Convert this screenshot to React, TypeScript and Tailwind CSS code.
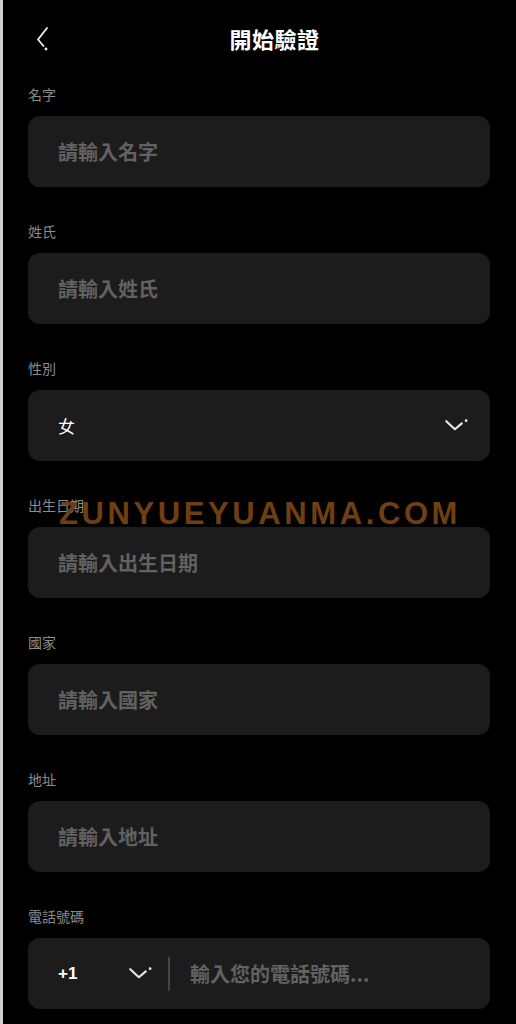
import React from "react";

const fields = [
  { label: "名字", placeholder: "請輸入名字" },
  { label: "姓氏", placeholder: "請輸入姓氏" },
  { label: "性別", value: "女", select: true },
  { label: "出生日期", placeholder: "請輸入出生日期" },
  { label: "國家", placeholder: "請輸入國家" },
  { label: "地址", placeholder: "請輸入地址" },
];

const Chevron = ({ className = "" }: { className?: string }) => (
  <svg viewBox="0 0 24 14" className={className} fill="none">
    <path d="M2 3 L10 10.5 L16.5 5" stroke="#e8e8e8" strokeWidth="2" strokeLinecap="round" strokeLinejoin="round" />
    <circle cx="20.5" cy="2.5" r="1.3" fill="#e8e8e8" />
  </svg>
);

export default function App() {
  return (
    <div
      className="relative min-h-[1024px] w-[516px] bg-black border-l-[3px] border-[#cfcfcf] text-white overflow-hidden"
      style={{ fontFamily: '"Noto Sans CJK TC", "Noto Sans", sans-serif' }}
    >
      {/* header */}
      <div className="relative flex h-[76px] items-center justify-center">
        <button className="absolute left-[30px] top-[24px] w-[24px] h-[30px]">
          <svg viewBox="0 0 24 30" className="w-[24px] h-[30px]" fill="none">
            <path d="M14 4 L5 15.5 L10.5 22" stroke="#f0f0f0" strokeWidth="1.8" strokeLinecap="round" strokeLinejoin="round" />
            <circle cx="13" cy="25" r="1.4" fill="#f0f0f0" />
          </svg>
        </button>
        <h1 className="ml-[30px] text-[22px] font-bold leading-none tracking-[0.5px]">開始驗證</h1>
      </div>

      <div className="flex flex-col gap-[34px] pt-[8px] pl-[25px] pr-[26px]">
        {fields.map((f) => (
          <div key={f.label} className="flex flex-col gap-[12px]">
            <label className="text-[14px] leading-[20px] text-[#8c8c8c]">{f.label}</label>
            <div className="flex h-[71px] items-center justify-between rounded-[12px] bg-[#1c1c1c] pl-[30px] pr-[20px]">
              {f.select ? (
                <>
                  <span className="text-[17px] text-white">{f.value}</span>
                  <Chevron className="w-[26px] h-[15px]" />
                </>
              ) : (
                <span className="text-[20px] font-bold text-[#626262]">{f.placeholder}</span>
              )}
            </div>
          </div>
        ))}

        <div className="flex flex-col gap-[12px]">
          <label className="text-[14px] leading-[20px] text-[#8c8c8c]">電話號碼</label>
          <div className="flex h-[71px] items-center rounded-[12px] bg-[#1c1c1c] pl-[30px] pr-[20px]">
            <span className="w-[70px] text-[17px] font-bold text-white" style={{ fontFamily: '"Liberation Sans", sans-serif' }}>+1</span>
            <Chevron className="w-[26px] h-[15px]" />
            <div className="ml-[14px] h-[34px] w-[2px] bg-[#444]" />
            <span className="ml-[20px] text-[20px] font-bold text-[#626262]">輸入您的電話號碼...</span>
          </div>
        </div>
      </div>

      {/* watermark */}
      <div
        className="pointer-events-none absolute left-[56px] top-[491px] text-[31px] font-bold tracking-[3.6px] text-[#6e3f12]"
        style={{ fontFamily: '"Liberation Sans", sans-serif' }}
      >
        ZUNYUEYUANMA.COM
      </div>
    </div>
  );
}
